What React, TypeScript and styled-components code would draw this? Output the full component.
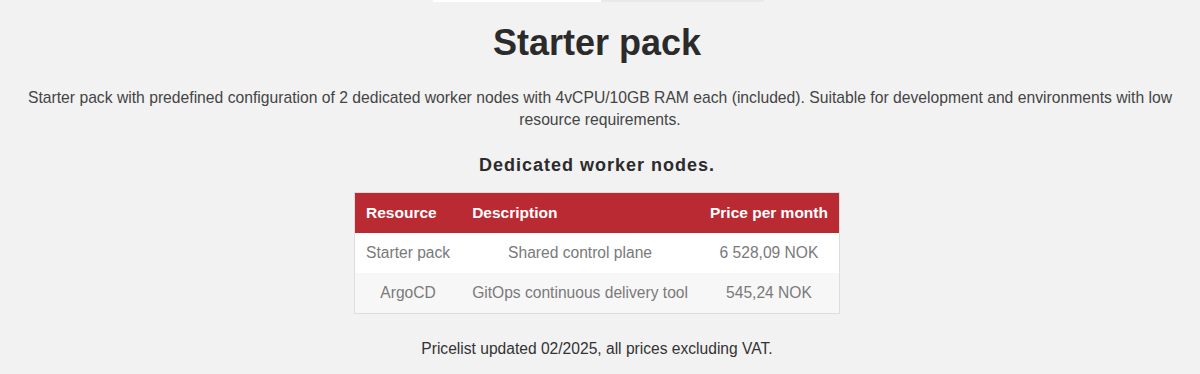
import React from "react";
import styled, { createGlobalStyle } from "styled-components";

const GlobalStyle = createGlobalStyle`
  html, body {
    margin: 0;
    padding: 0;
    background: #f2f2f2;
  }
  body {
    font-family: "Liberation Sans", Arial, Helvetica, sans-serif;
  }
`;

interface Row {
  resource: string;
  description: string;
  price: string;
}

const rows: Row[] = [
  { resource: "Starter pack", description: "Shared control plane", price: "6 528,09 NOK" },
  { resource: "ArgoCD", description: "GitOps continuous delivery tool", price: "545,24 NOK" },
];

const App: React.FC = () => {
  return (
    <Page>
      <GlobalStyle />
      <TabStrip>
        <Tab $active />
        <Tab />
      </TabStrip>
      <Title>Starter pack</Title>
      <Intro>
        Starter pack with predefined configuration of 2 dedicated worker nodes with 4vCPU/10GB RAM
        each (included). Suitable for development and environments with low resource requirements.
      </Intro>
      <Subtitle>Dedicated worker nodes.</Subtitle>
      <PriceTable>
        <thead>
          <tr>
            <Th>Resource</Th>
            <Th>Description</Th>
            <Th>Price per month</Th>
          </tr>
        </thead>
        <tbody>
          {rows.map((r, i) => (
            <BodyRow key={r.resource} $striped={i % 2 === 1}>
              <Td>{r.resource}</Td>
              <Td>{r.description}</Td>
              <Td>{r.price}</Td>
            </BodyRow>
          ))}
        </tbody>
      </PriceTable>
      <Note>Pricelist updated 02/2025, all prices excluding VAT.</Note>
    </Page>
  );
};

const Page = styled.main`
  display: flex;
  flex-direction: column;
  align-items: center;
  width: 1200px;
  height: 374px;
  overflow: hidden;
  color: #333;
`;

const TabStrip = styled.div`
  display: flex;
  width: 331px;
  height: 2px;
  margin-right: 3px;
`;

const Tab = styled.div<{ $active?: boolean }>`
  flex: ${(p) => (p.$active ? "0 0 168px" : "1")};
  background: ${(p) => (p.$active ? "#ffffff" : "#e9e9e9")};
`;

const Title = styled.h1`
  margin: 21px 6px 0 0;
  font-size: 36px;
  line-height: 40px;
  font-weight: 700;
  color: #2b2b2b;
`;

const Intro = styled.p`
  margin: 24px 0 0;
  padding: 0 24px;
  font-size: 15.7px;
  line-height: 22px;
  text-align: center;
  color: #444;
`;

const Subtitle = styled.h3`
  margin: 22px 6px 0 0;
  font-size: 18px;
  line-height: 24px;
  font-weight: 700;
  letter-spacing: 1px;
  color: #2b2b2b;
`;

const PriceTable = styled.table`
  margin: 15px 6px 0 0;
  border-collapse: collapse;
  border: 1px solid #dddddd;
  font-size: 15.6px;
`;

const Th = styled.th`
  height: 40px;
  padding: 0 11px;
  background: #b92a33;
  color: #ffffff;
  font-size: 15.5px;
  font-weight: 700;
  text-align: left;
`;

const BodyRow = styled.tr<{ $striped: boolean }>`
  background: ${(p) => (p.$striped ? "#f7f7f7" : "#ffffff")};
`;

const Td = styled.td`
  height: 40px;
  padding: 0 11px;
  color: #7a7a7a;
  text-align: center;
`;

const Note = styled.p`
  margin: 25px 6px 0 0;
  font-size: 15.6px;
  line-height: 20px;
  color: #333;
`;

export default App;
